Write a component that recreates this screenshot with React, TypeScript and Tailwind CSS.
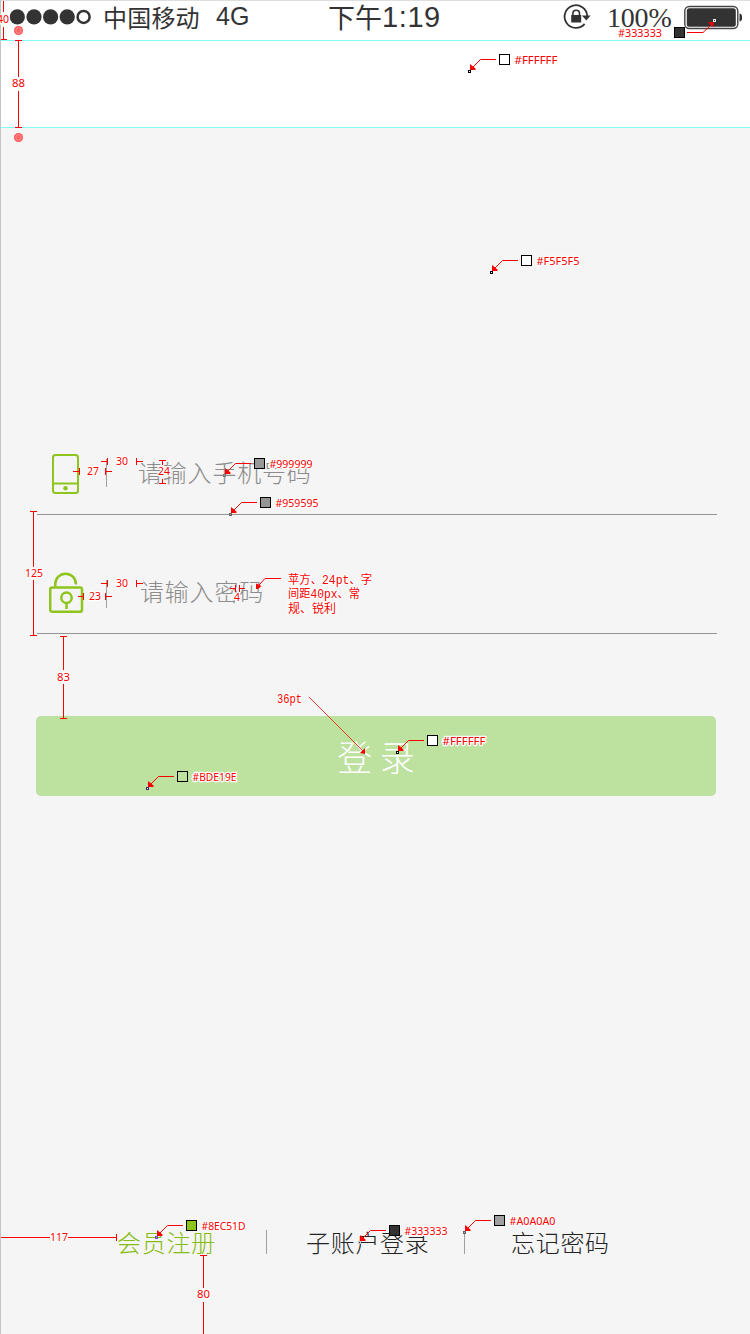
import React from "react";

const RED = "#fb0000";

function Label({ x, y, w, children, mono = false }: { x: number; y: number; w: number; children: string; mono?: boolean }) {
  return (
    <text
      x={x}
      y={y}
      textLength={w}
      lengthAdjust="spacingAndGlyphs"
      fill={RED}
      stroke="#fff"
      strokeWidth={2.5}
      strokeLinejoin="round"
      className={
        mono
          ? "text-[12px] [paint-order:stroke] [font-family:'Liberation_Mono','Noto_Sans_CJK_SC',monospace]"
          : "text-[11px] [paint-order:stroke] [font-family:'Noto_Sans',sans-serif]"
      }
    >
      {children}
    </text>
  );
}

/* Colour callout: a swatch with its hex value and an arrow to the sampled point. */
function Callout({ x, y, fill, text, w = 43, dot = "#000", dotFill = "#fff" }: { x: number; y: number; fill: string; text: string; w?: number; dot?: string; dotFill?: string }) {
  return (
    <g>
      <path d={`M${x - 8} ${y + 0.5}H${x - 23.5}L${x - 31} ${y + 8}`} fill="none" stroke={RED} />
      <path d={`M${x - 34} ${y + 5}v6h5.500v-1.500z`} fill={RED} />
      <rect x={x - 35.5} y={y + 11.5} width={2} height={2} fill={dotFill} stroke={dot} />
      <rect x={x - 4.5} y={y - 4.5} width={10} height={10} fill={fill} stroke="#000" />
      <Label x={x + 10.5} y={y + 5} w={w}>{text}</Label>
    </g>
  );
}

function Touch({ y }: { y: number }) {
  return (
    <g>
      <circle cx={18.5} cy={y} r={4.5} fill="#ff8080" />
      <circle cx={18.5} cy={y} r={4} fill="none" stroke="#ff5555" />
      <circle cx={18.5} cy={y} r={1.4} fill="none" stroke="#ff5050" />
    </g>
  );
}

function Annotations() {
  return (
    <svg className="pointer-events-none absolute inset-0" width="750" height="1334" viewBox="0 0 750 1334">
      <g fill="none" stroke={RED}>
        <path d="M3.5 1v11M3.5 27v13M1 39.5h6" />
        <path d="M18.5 40v37M18.5 91v37M15 40.5h7M15 127.5h7" />
        <path d="M73 471.5h6M79.5 468v7M105.5 468v7M106 471.5h6M101 461.5h6M107.5 458v7M136.5 458v7M137 461.5h6" />
        <path d="M159 460.5h7M162.5 460v5M162.5 479v4M159 483.5h7" />
        <path d="M78 596.5h5M83.5 593v7M105.5 593v7M106 596.5h6M101 583.5h6M107.5 580v7M136.5 580v7M137 583.5h6" />
        <path d="M230 588.5h6M235.5 585v7M239.5 585v7M240 588.5h5" />
        <path d="M33.5 511v56M33.5 580v55M30 511.5h7M30 635.5h7" />
        <path d="M63.5 636v34M63.5 684v34M60 636.5h7M60 718.5h7" />
        <path d="M1 1237.5h49M68 1237.5h48M116.5 1234v7" />
        <path d="M203.5 1255v33M203.5 1302v32M200 1255.5h7" />
        <path d="M281 578.5H265L259 585" />
        <path d="M309 697L364 752" strokeOpacity={0.75} />
        <path d="M687 32.5H703L711 25" />
      </g>
      <path d="M256 583.500v5.500h2l3.500 -3z" fill={RED} />
      <path d="M360 753l5-5v6z" fill={RED} />
      <path d="M708 22h5.500v5.500z" fill={RED} />
      <Touch y={30.5} />
      <Touch y={137.5} />
      <Label x={-3} y={23} w={12}>40</Label>
      <Label x={12} y={87} w={13}>88</Label>
      <Label x={87} y={475} w={12}>27</Label>
      <Label x={116} y={465} w={12}>30</Label>
      <Label x={158} y={475} w={12}>24</Label>
      <Label x={89} y={600} w={12}>23</Label>
      <Label x={116} y={587} w={12}>30</Label>
      <Label x={234} y={601} w={6}>4</Label>
      <Label x={25} y={577} w={18}>125</Label>
      <Label x={57} y={681} w={13}>83</Label>
      <Label x={50} y={1241} w={18}>117</Label>
      <Label x={197} y={1298} w={13}>80</Label>
      <Label x={277} y={703} w={25} mono>36pt</Label>
      <Label x={288} y={584} w={84} mono>苹方、24pt、字</Label>
      <Label x={288} y={598} w={72} mono>间距40px、常</Label>
      <Label x={288} y={613} w={48} mono>规、锐利</Label>
      <Callout x={504} y={59} fill="#fff" text="#FFFFFF" />
      <Callout x={526} y={260} fill="#fff" text="#F5F5F5" />
      <Callout x={259} y={463} fill="#999999" text="#999999" dot="#777" dotFill="#999" />
      <Callout x={265} y={502} fill="#959595" text="#959595" dot="#666" dotFill="#999" />
      <Callout x={432} y={740} fill="#fff" text="#FFFFFF" />
      <Callout x={182} y={776} fill="#BDE19E" text="#BDE19E" w={44} dot="#45245f" />
      <Callout x={191} y={1225} fill="#8EC51D" text="#8EC51D" w={44} dot="#7141e2" dotFill="#8EC51D" />
      <Callout x={394} y={1230} fill="#333333" text="#333333" dot="#ccc" dotFill="#333" />
      <Callout x={499} y={1220} fill="#A0A0A0" text="#A0A0A0" w={46} dot="#666" dotFill="#aaa" />
      <rect x={674.5} y={27.5} width={10} height={10} fill="#333" stroke="#000" />
      <Label x={618} y={37} w={44}>#333333</Label>
      <rect x={713.5} y={19.5} width={2} height={2} fill="#333" stroke="#eee" />
    </svg>
  );
}

function StatusBar() {
  return (
    <header className="flex h-10 items-start border-t border-[#dedede] pl-2 leading-8 text-[#333]">
      <svg className="mt-[7px] shrink-0" width="84" height="18" viewBox="0 0 84 18">
        <g fill="#333">
          <circle cx="8.300" cy="8.900" r="7.600" />
          <circle cx="25" cy="8.900" r="7.600" />
          <circle cx="41.600" cy="8.900" r="7.600" />
          <circle cx="58.200" cy="8.900" r="7.600" />
        </g>
        <circle cx="74.600" cy="8.900" r="6" fill="none" stroke="#333" strokeWidth="2.500" />
      </svg>
      <span className="ml-[10px] w-[113px] shrink-0 text-[24px] tracking-[.2px]">中国移动</span>
      <span className="-mt-px w-[112px] shrink-0 text-[25px] [font-family:'Liberation_Sans',sans-serif]">4G</span>
      <span className="w-[54px] shrink-0 text-[27px]">下午</span>
      <span className="w-[180px] shrink-0 text-[29px] tracking-[.6px] [font-family:'Liberation_Sans',sans-serif]">1:19</span>
      <svg className="mt-px shrink-0" width="31" height="30" viewBox="0 0 31 30">
        <path d="M22.600 21.800A11.300 11.300 0 1 1 25.200 14" fill="none" stroke="#333" strokeWidth="1.800" />
        <path d="M19.800 13.500h8.800l-4.200 5z" fill="#333" />
        <rect x="9.200" y="13" width="10" height="7.500" fill="#333" />
        <path d="M10.900 14v-2.500a3.300 3.300 0 0 1 6.600 0v2.500" fill="none" stroke="#333" strokeWidth="1.600" />
      </svg>
      <span className="mt-px ml-[14px] w-[77px] shrink-0 text-[28px] tracking-[-.2px] [font-family:'Liberation_Serif',serif]">100%</span>
      <svg className="mt-[4px] shrink-0" width="58" height="26" viewBox="0 0 58 26">
        <rect x=".8" y="1.500" width="53" height="22" rx="4.500" fill="#fff" stroke="#444" strokeWidth="1.400" />
        <rect x="2.800" y="3.300" width="49" height="18.400" rx="2.500" fill="#333" />
        <path d="M55.500 8.500c4 1 4 7 0 8z" fill="#333" />
      </svg>
    </header>
  );
}

function PhoneIcon() {
  return (
    <svg className="mt-[14px] ml-[15px] shrink-0" width="28" height="42" viewBox="0 0 28 42" fill="none" stroke="#8EC51D" strokeWidth="2">
      <rect x="1" y="1" width="25" height="38" rx="2.500" />
      <path d="M1 29.500h25" />
      <circle cx="13.500" cy="34.200" r="2.200" fill="#8EC51D" stroke="none" />
    </svg>
  );
}

function LockIcon() {
  return (
    <svg className="mt-[12px] ml-[12px] shrink-0" width="35" height="42" viewBox="0 0 35 42" fill="none" stroke="#8EC51D" strokeWidth="2.500">
      <rect x="1.200" y="15.500" width="31.800" height="24.200" rx="2" />
      <path d="M6.300 14.500v-2.500a10.300 10.300 0 0 1 20.600 0v0.500" />
      <circle cx="17.500" cy="25.800" r="5.200" />
      <path d="M17.500 31v6" />
    </svg>
  );
}

export default function App() {
  return (
    <div className="relative flex h-[1334px] w-[750px] flex-col overflow-hidden whitespace-nowrap bg-[#f5f5f5] [font-family:'Noto_Sans_CJK_SC',sans-serif]">
      <div className="border-l border-[#c4c4c4] bg-white">
        <StatusBar />
        <div className="h-[88px] border-y border-[#80ffff]" />
      </div>

      <main className="h-[1102px] shrink-0 border-l border-[#c4c4c4] pt-[312px] pl-[35px]">
        <div className="ml-px flex h-[75px] w-[680px] border-b border-[#959595]">
          <PhoneIcon />
          <span className="mt-[19px] ml-[26px] h-7 w-px bg-[#a0a0a0]" />
          <span className="mt-[16px] ml-[31px] text-[24px] leading-8 font-light tracking-[.8px] text-[#8c8c8c]">请输入手机号码</span>
        </div>
        <div className="mt-[45px] ml-px flex h-[74px] w-[680px] border-b border-[#959595]">
          <LockIcon />
          <span className="mt-[20px] ml-[22px] h-7 w-px bg-[#a0a0a0]" />
          <span className="mt-[15px] ml-[33px] text-[24px] leading-8 font-light tracking-[.8px] text-[#8c8c8c]">请输入密码</span>
        </div>
        <button className="mt-[82px] block h-20 w-[680px] rounded-[5px] bg-[#bde19e] text-[35px] leading-[76px] font-light text-white">
          登 录
        </button>
      </main>

      <footer className="flex h-[104px] shrink-0 border-l border-[#c4c4c4] pl-[116px] text-[24px] leading-[24px] font-light tracking-[.7px] text-[#222]">
        <span className="w-[149px] text-[#84bd10]">会员注册</span>
        <span className="h-6 w-px bg-[#a0a0a0]" />
        <span className="w-[197px] pl-[39px]">子账户登录</span>
        <span className="mt-[2px] h-[22px] w-px bg-[#a0a0a0]" />
        <span className="pl-[46px]">忘记密码</span>
      </footer>

      <Annotations />
    </div>
  );
}
